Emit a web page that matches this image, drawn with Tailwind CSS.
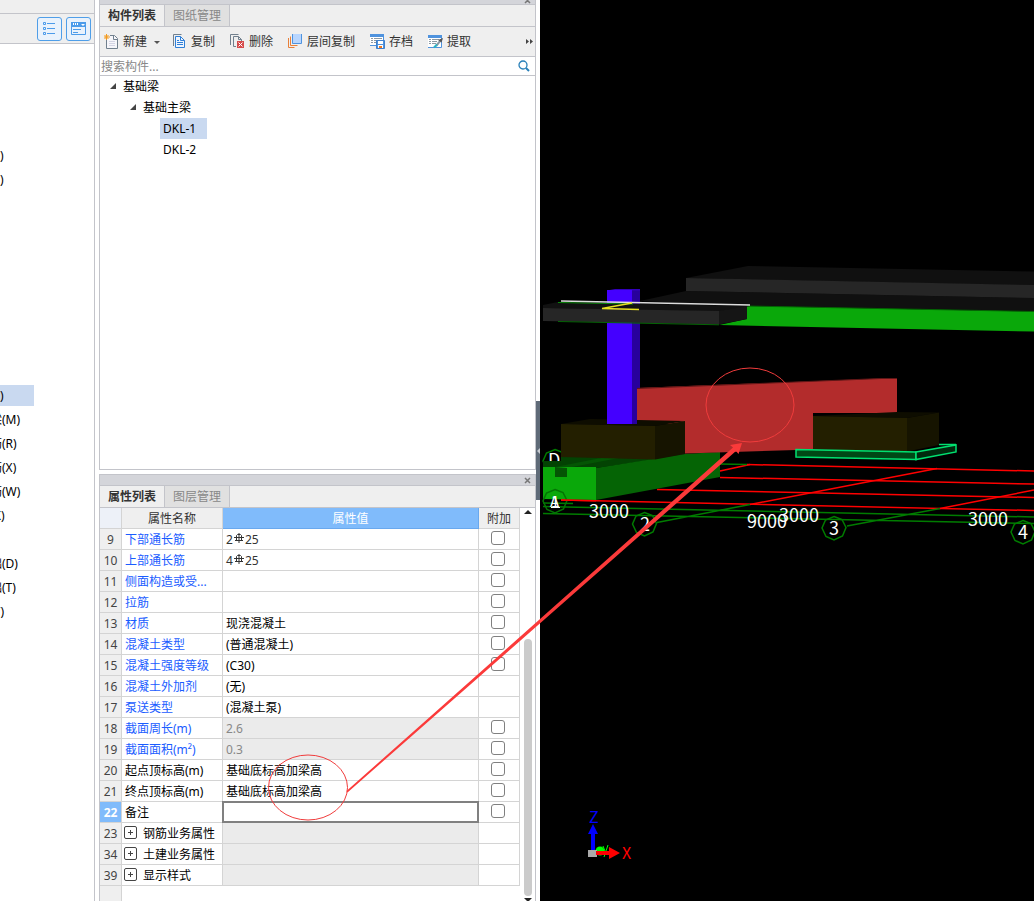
<!DOCTYPE html>
<html lang="zh-CN">
<head>
<meta charset="UTF-8">
<meta name="viewport" content="width=device-width, initial-scale=1.0">
<title>构件列表</title>
<script src="https://cdn.jsdelivr.net/npm/@tailwindcss/browser@4"></script>
</head>
<body class="relative flex h-screen overflow-hidden bg-white text-xs text-black font-['Noto_Sans','Noto_Sans_CJK_SC',sans-serif]">

<!-- Module tree -->
<aside class="flex w-[95px] shrink-0 flex-col overflow-hidden border-r border-[#c3c4ca]">
  <div class="h-[14px] shrink-0 border-b border-[#c3c4ca] bg-[#efefef]"></div>
  <div class="flex h-[30px] shrink-0 items-center justify-end gap-1 border-b border-[#c3c4ca] bg-[#efefef] pr-[3px]">
    <button aria-label="列表" class="flex h-6 w-[25px] items-center justify-center rounded-[3px] border border-[#4f9ee8] bg-[#e9f2fc]">
      <svg class="h-4 w-4" viewBox="0 0 16 16" fill="none" stroke="#4b9bea"><path d="M1.500 1.500h2v2h-2zM1.500 6.500h2v2h-2zM1.500 11.500h2v2h-2z"/><path d="M5 2.500h8M5 7.500h8M5 12.500h8"/></svg>
    </button>
    <button aria-label="窗口" class="flex h-6 w-[25px] items-center justify-center rounded-[3px] border border-[#4f9ee8] bg-[#e9f2fc]">
      <svg class="h-4 w-4" viewBox="0 0 16 16"><path d="M0 1h15v5H0z" fill="#4b9bea"/><path d="M2 2h1v2H2zM4 2h1v2H4zM6 2h1v2H6zM10 3h4l-2 2z" fill="#fff"/><path d="M.5 6v7.500h14V6M2 8.500h8M2 11.500h5" fill="none" stroke="#4b9bea"/></svg>
    </button>
  </div>
  <ul class="mt-[100px] -ml-[10px] leading-6 whitespace-nowrap">
    <li class="h-6">(F)</li>
    <li class="h-6">(F)</li>
  </ul>
  <ul class="mt-[193px] -ml-[10px] leading-6 whitespace-nowrap">
    <li class="mb-0.5 h-[21px] w-11 bg-[#c9d9f0] leading-[21px]">(F)</li>
    <li class="h-6">梁(M)</li>
    <li class="h-6">筋(R)</li>
    <li class="h-6">筋(X)</li>
    <li class="h-6">筋(W)</li>
    <li class="h-6">(K)</li>
    <li class="h-6"></li>
    <li class="h-6">础(D)</li>
    <li class="h-6">础(T)</li>
    <li class="h-6">(Y)</li>
  </ul>
</aside>

<main class="ml-1 flex w-[437px] shrink-0 flex-col">

  <!-- Component list -->
  <section class="flex h-[470px] shrink-0 flex-col border-x border-b border-[#c3c4ca]">
    <div class="flex h-[5px] shrink-0 items-end justify-end overflow-hidden border-b border-[#c3c4ca] bg-[#d4d5da] pr-1">
      <svg class="h-[7px] w-[7px]" viewBox="0 0 7 7"><path d="M1 1l5 5M6 1l-5 5" stroke="#777" stroke-width="1.500"/></svg>
    </div>
    <div class="flex h-[22px] shrink-0 border-b border-[#c3c4ca] bg-[#efefef]">
      <button class="w-[65px] border-r border-[#c3c4ca] font-bold text-[#333]">构件列表</button>
      <button class="w-[65px] border-r border-[#c3c4ca] bg-[#e0e0e0] text-[#888]">图纸管理</button>
    </div>
    <div class="flex h-[30px] shrink-0 items-center gap-[10px] border-b border-[#c3c4ca] bg-[#efefef] pl-1 whitespace-nowrap text-[#333]">
      <button class="flex items-center gap-[3px]">
        <svg class="h-4 w-4" viewBox="0 0 16 16" fill="none"><path d="M2.500 6v8.500h11v-10l-3-3H6" fill="#f6f6fa" stroke="#71808e"/><path d="M9.500 1.500v4h4" stroke="#71808e"/><path d="M5 7.500h6M5 9.500h6M5 11.500h6" stroke="#d4d4e4"/><path d="M2.500 0v6M0 3h6M.5 1l4 4M4.500 1l-4 4" stroke="#f39a1e"/></svg>
        新建
        <svg class="h-3 w-3" viewBox="0 0 12 12"><path d="M4 5h6L7 8z" fill="#555"/></svg>
      </button>
      <button class="flex items-center gap-[3px] pr-[5px]">
        <svg class="h-4 w-4" viewBox="0 0 16 16" fill="none"><path d="M1.500 12V.5h8" stroke="#71808e"/><path d="M3.500 2.500h5l4 4v7h-9z" fill="#eef5ff" stroke="#2f7fd6"/><path d="M8.500 2.500v4h4M5 6.500h2M5 8.500h6M5 10.500h6" stroke="#2f7fd6"/></svg>
        复制
      </button>
      <button class="flex items-center gap-[3px] pr-[5px]">
        <svg class="h-4 w-4" viewBox="0 0 16 16" fill="none"><path d="M.5 11V.5h8" stroke="#71808e"/><path d="M6 12.500H3.500v-10h5l3 3V7M8.500 2.500v3h3" stroke="#71808e"/><path d="M7 7h7v7H7z" fill="#d64b4b"/><path d="M8.500 8.500l4 4M12.500 8.500l-4 4" stroke="#fff"/></svg>
        删除
      </button>
      <button class="flex items-center gap-[3px] pr-[5px]">
        <svg class="h-4 w-4" viewBox="0 0 16 16" fill="none"><path d="M.5 4v9.500h6M2.500 2.500v9h7" stroke="#e8803a"/><path d="M4.500-.5h9v10h-9z" fill="#b8d6ff" stroke="#4f93de"/></svg>
        层间复制
      </button>
      <button class="flex items-center gap-[3px] pr-[5px]">
        <svg class="h-4 w-4" viewBox="0 0 16 16" fill="none"><path d="M-.5.500h14v11h-14z" fill="#fff" stroke="#4f93de"/><path d="M-1 0h15v3H-1z" fill="#4f93de"/><path d="M1 4.500h2M4 4.500h8M1 6.500h2M4 6.500h4M1 8.500h2M4 8.500h2" stroke="#8b98a3"/><path d="M6.500 6.500h8v8h-8z" fill="#4f93de" stroke="#3f80cc"/><path d="M8 7h5v3H8z" fill="#fff"/><path d="M8 11h5v3H8z" fill="#fff"/><path d="M9 12h3v2H9z" fill="#f07820"/></svg>
        存档
      </button>
      <button class="flex items-center gap-[3px] pr-[5px]">
        <svg class="h-4 w-4" viewBox="0 0 16 16" fill="none"><path d="M-.5 1.500h14v12h-14z" fill="#fff" stroke="#4f93de"/><path d="M-1 1h15v3H-1z" fill="#4f93de"/><path d="M1 5.500h2M4 5.500h7M1 7.500h2M4 7.500h5M1 9.500h2M4 9.500h4" stroke="#8b98a3"/><path d="M8 12l5-6" stroke="#8b98a3" stroke-width="2"/><path d="M6 13.500l3-3" stroke="#2bb5c4" stroke-width="2"/><path d="M10 6l3.500 2.500L15 4z" fill="#555"/></svg>
        提取
      </button>
      <button aria-label="更多" class="ml-auto pr-px">
        <svg class="h-2 w-2" viewBox="0 0 8 8"><path d="M0 1v5l3-2.500zM4 1v5l3-2.500z" fill="#444"/></svg>
      </button>
    </div>
    <div class="flex h-[19px] shrink-0 items-center border-b border-[#c3c4ca]">
      <input type="text" aria-label="搜索构件" placeholder="搜索构件..." class="min-w-0 flex-1 pt-px pl-px placeholder:text-[#888]">
      <button aria-label="搜索" class="pr-[5px]">
        <svg class="h-3 w-3" viewBox="0 0 12 12" fill="none" stroke="#2980b9"><circle cx="5" cy="5" r="4" stroke-width="1.300"/><path d="M8 8l3 3" stroke-width="2"/></svg>
      </button>
    </div>
    <ul class="leading-[21px]">
      <li class="flex items-center gap-[7px] pl-[9px]"><svg class="h-[7px] w-[7px]" viewBox="0 0 7 7"><path d="M7 0v6H1z" fill="#444"/></svg>基础梁</li>
      <li class="flex items-center gap-[7px] pl-[29px]"><svg class="h-[7px] w-[7px]" viewBox="0 0 7 7"><path d="M7 0v6H1z" fill="#444"/></svg>基础主梁</li>
      <li class="ml-[60px] w-[47px] bg-[#c9d9f0] pl-[3px]">DKL-1</li>
      <li class="ml-[60px] w-[47px] pl-[3px]">DKL-2</li>
    </ul>
  </section>

  <!-- Properties -->
  <section class="mt-1 flex min-h-0 flex-1 flex-col border-x border-t border-[#c3c4ca]">
    <div class="flex h-[11px] shrink-0 items-center justify-end border-b border-[#c3c4ca] bg-[#d4d5da] pr-1">
      <button aria-label="关闭"><svg class="h-[7px] w-[7px]" viewBox="0 0 7 7"><path d="M1 1l5 5M6 1l-5 5" stroke="#777" stroke-width="1.500"/></svg></button>
    </div>
    <div class="flex h-[22px] shrink-0 border-b border-[#c3c4ca] bg-[#efefef]">
      <button class="w-[65px] border-r border-[#c3c4ca] font-bold text-[#333]">属性列表</button>
      <button class="w-[65px] border-r border-[#c3c4ca] bg-[#e0e0e0] text-[#888]">图层管理</button>
    </div>
    <div class="flex min-h-0 flex-1">
      <div class="flex min-w-0 flex-1 flex-col overflow-hidden">
        <table class="w-full table-fixed border-separate border-spacing-0 leading-[18px] whitespace-nowrap [&_td]:h-[21px] [&_td]:border-r [&_td]:border-b [&_td]:border-[#d4d4d4] [&_td]:p-0 [&_td]:pt-0.5 [&_td]:pl-[3px] [&_th]:h-[21px] [&_th]:border-r [&_th]:border-b [&_th]:border-[#d4d4d4] [&_th]:p-0 [&_th]:pt-0.5 [&_th]:font-normal [&_tbody_th]:bg-[#efefef] [&_tbody_th]:text-[#444] [&_td:last-child]:p-0 [&_td:last-child]:pr-0.5 [&_td:last-child]:pb-0.5 [&_input[type=checkbox]]:block [&_input[type=checkbox]]:mx-auto [&_input[type=checkbox]]:h-[14px] [&_input[type=checkbox]]:w-[14px] [&_input[type=checkbox]]:appearance-none [&_input[type=checkbox]]:rounded-[3px] [&_input[type=checkbox]]:border [&_input[type=checkbox]]:border-[#808080] [&_input[type=checkbox]]:bg-white">
          <colgroup><col class="w-[22px]"><col class="w-[101px]"><col><col class="w-[41px]"></colgroup>
          <thead>
            <tr class="text-[#333]"><th class="bg-[#edf1f8]"></th><th class="bg-[#efefef]">属性名称</th><th class="border-[#69a8ee]! bg-[#80bbfb] text-white">属性值</th><th class="bg-[#efefef]">附加</th></tr>
          </thead>
          <tbody>
            <tr><th>9</th><td class="text-[#1a5cff]">下部通长筋</td><td class="text-[#333]">2<svg class="mx-px inline h-3 w-[10px] align-[-1px]" viewBox="0 0 10 12" fill="none" stroke="#333"><path d="M2.500 7V2.500l1-1h3l1 1V7M5 0v10M0 4.500h10M1 7.500h8"/></svg>25</td><td><input type="checkbox" aria-label="附加 9"></td></tr>
            <tr><th>10</th><td class="text-[#1a5cff]">上部通长筋</td><td class="text-[#333]">4<svg class="mx-px inline h-3 w-[10px] align-[-1px]" viewBox="0 0 10 12" fill="none" stroke="#333"><path d="M2.500 7V2.500l1-1h3l1 1V7M5 0v10M0 4.500h10M1 7.500h8"/></svg>25</td><td><input type="checkbox" aria-label="附加 10"></td></tr>
            <tr><th>11</th><td class="text-[#1a5cff]">侧面构造或受...</td><td></td><td><input type="checkbox" aria-label="附加 11"></td></tr>
            <tr><th>12</th><td class="text-[#1a5cff]">拉筋</td><td></td><td><input type="checkbox" aria-label="附加 12"></td></tr>
            <tr><th>13</th><td class="text-[#1a5cff]">材质</td><td>现浇混凝土</td><td><input type="checkbox" aria-label="附加 13"></td></tr>
            <tr><th>14</th><td class="text-[#1a5cff]">混凝土类型</td><td>(普通混凝土)</td><td><input type="checkbox" aria-label="附加 14"></td></tr>
            <tr><th>15</th><td class="text-[#1a5cff]">混凝土强度等级</td><td>(C30)</td><td><input type="checkbox" aria-label="附加 15"></td></tr>
            <tr><th>16</th><td class="text-[#1a5cff]">混凝土外加剂</td><td>(无)</td><td></td></tr>
            <tr><th>17</th><td class="text-[#1a5cff]">泵送类型</td><td>(混凝土泵)</td><td></td></tr>
            <tr><th>18</th><td class="text-[#1a5cff]">截面周长(m)</td><td class="bg-[#ebebeb] text-[#888]">2.6</td><td><input type="checkbox" aria-label="附加 18"></td></tr>
            <tr><th>19</th><td class="text-[#1a5cff]">截面面积(m²)</td><td class="bg-[#ebebeb] text-[#888]">0.3</td><td><input type="checkbox" aria-label="附加 19"></td></tr>
            <tr><th>20</th><td>起点顶标高(m)</td><td>基础底标高加梁高</td><td><input type="checkbox" aria-label="附加 20"></td></tr>
            <tr><th>21</th><td>终点顶标高(m)</td><td>基础底标高加梁高</td><td><input type="checkbox" aria-label="附加 21"></td></tr>
            <tr><th class="bg-[#80bbfb]! font-bold! text-white!">22</th><td><label for="remark">备注</label></td><td class="p-0!"><input id="remark" type="text" class="relative block h-5 w-full px-[3px] outline-2 -outline-offset-1 outline-[#808080]"></td><td><input type="checkbox" aria-label="附加 22"></td></tr>
            <tr><th>23</th><td><button class="flex items-start gap-[6px]"><svg class="-ml-px mt-px h-[13px] w-[13px]" viewBox="0 0 13 13" fill="none" stroke="#444"><rect x=".5" y=".5" width="12" height="12" rx="1.500"/><path d="M4 6.500h5M6.500 4v5"/></svg>钢筋业务属性</button></td><td class="bg-[#ebebeb]"></td><td></td></tr>
            <tr><th>34</th><td><button class="flex items-start gap-[6px]"><svg class="-ml-px mt-px h-[13px] w-[13px]" viewBox="0 0 13 13" fill="none" stroke="#444"><rect x=".5" y=".5" width="12" height="12" rx="1.500"/><path d="M4 6.500h5M6.500 4v5"/></svg>土建业务属性</button></td><td class="bg-[#ebebeb]"></td><td></td></tr>
            <tr><th>39</th><td><button class="flex items-start gap-[6px]"><svg class="-ml-px mt-px h-[13px] w-[13px]" viewBox="0 0 13 13" fill="none" stroke="#444"><rect x=".5" y=".5" width="12" height="12" rx="1.500"/><path d="M4 6.500h5M6.500 4v5"/></svg>显示样式</button></td><td class="bg-[#ebebeb]"></td><td></td></tr>
          </tbody>
        </table>
        <div class="w-[22px] flex-1 border-r border-[#d4d4d4] bg-[#efefef]"></div>
      </div>
      <!-- Scrollbar -->
      <div class="flex w-[15px] shrink-0 flex-col items-center pt-0.5">
        <svg class="h-1 w-2 shrink-0" viewBox="0 0 8 4"><path d="M4 0l4 4H0z" fill="#222"/></svg>
        <div class="mt-[125px] mb-0.5 w-2 flex-1 rounded-full bg-[#cbcbcb]"></div>
        <svg class="h-[3px] w-2 shrink-0" viewBox="0 0 8 3"><path d="M0 0h8L5 3H3z" fill="#222"/></svg>
      </div>
    </div>
  </section>
</main>

<!-- Splitter -->
<div class="w-1 shrink-0 pt-[401px]">
  <button aria-label="折叠" class="flex h-[99px] w-full items-center justify-center bg-[#5f6b78]">
    <svg class="h-[6px] w-[3px]" viewBox="0 0 3 6"><path d="M3 0v6L0 3z" fill="#c8ccd2"/></svg>
  </button>
</div>

<!-- 3D view -->
<section class="min-w-0 flex-1 overflow-hidden bg-black">
  <svg class="h-full w-full font-['Noto_Sans_CJK_SC',sans-serif]" font-size="18" fill="#fff">
    <g transform="translate(-540 0)">
      <!-- axis grid -->
      <g fill="none" stroke="#f00" stroke-width="1.500">
        <path d="M747 464.500L1034 471M720 477.500L1034 484M657 489.500L1034 497.500M561 500L1034 510.500"/>
        <path d="M720 471l30-6.500M750 504.500l187-36M940 508.500l94-18.500"/>
      </g>
      <g fill="none" stroke="#007c00" stroke-width="1.500">
        <path d="M720 464l27 .5M543 503l30 .5M543 506.500L1034 517M543 513.500L1034 523.500M657 522.500l93-18M847 526l93-17.500"/>
        <path id="oct" d="M644.500 512.500l8 3 4 8-3.500 8.500-8.500 4-8-3.500-4-8.500 3.500-8z"/>
        <use href="#oct" x="189.500" y="4"/>
        <use href="#oct" x="378.500" y="8"/>
        <use href="#oct" x="-89.500" y="-63"/>
      </g>
      <text x="548" y="467">D</text>

      <!-- foundation beam -->
      <path d="M543 467v-6h18v-4l124-4v2l-89 13z" fill="#034303"/>
      <path d="M555 467l46-9h18l-52 10z" fill="#045504"/>
      <path d="M596 468l89-14 35-2v25l-124 23z" fill="#056405"/>
      <path d="M543 467h53v33l-53-1z" fill="#0aa80a"/>
      <path d="M555 467l12 1v9h-12z" fill="#045504"/>
      <use href="#oct" x="-89.500" y="-23" fill="none" stroke="#047404" stroke-width="1.500"/>
      <path d="M561 500l35 .7" stroke="#f00" stroke-width="1.500"/>
      <text x="550" y="507" font-size="15">A</text>
      <text x="551" y="507" font-size="15">1</text>
      <path d="M551 507.500h9" stroke="#fff"/>

      <!-- slabs -->
      <path d="M686 278l62-12 286 5.500v14z" fill="#101010"/>
      <path d="M640 301l46-10 348 7v13l-287-5z" fill="#101010"/>
      <path d="M686 278l348 7v13l-348-7z" fill="#262626"/>
      <path d="M719 325l28-6v-13l287 5.500v20z" fill="#0aa80a"/>
      <path d="M747 306l287 5.500" stroke="#056405"/>

      <!-- column -->
      <path d="M632 290l8-1v135h-8z" fill="#28009c"/>
      <path d="M607 290.500l8-1.500h25v1.500z" fill="#30b"/>
      <path d="M607 290h25v134h-25z" fill="#40f"/>
      <path d="M543 305l15-3 192 4-31 5.500-176-3.500z" fill="#111"/>
      <path d="M719 311l28-5v13l-28 5.500z" fill="#151515"/>
      <path d="M543 308l176 3v13.500l-176-3.500z" fill="#262626"/>
      <path d="M558 321.500l161 3.300" stroke="#056405"/>
      <path d="M558 302.500l75 1.500" stroke="#0a8a0a"/>
      <path d="M561 301l189 4" stroke="#ddd" stroke-width="1.500"/>
      <path d="M632 303l-30 5.500 37 1" fill="none" stroke="#e8e020" stroke-width="1.300"/>

      <!-- selected wall beam -->
      <path d="M637 388l244-9.500h16V413H813v36.500l-128 4V424h-48z" fill="#b32c2c"/>
      <path d="M637 388.500l244-10h16" fill="none" stroke="#601616"/>

      <!-- footings -->
      <path d="M561 424l29-5 95 2-30 5z" fill="#0e0d00"/>
      <path d="M607 400h25v24h-25z" fill="#40f"/>
      <path d="M632 388h5v36h-5z" fill="#28009c"/>
      <path d="M561 424l94 2v33.500l-94-2.500z" fill="#231f00"/>
      <path d="M655 426l30-5v33l-30 5.500z" fill="#161400"/>
      <path d="M813 416l84-4 42 .5-32 5.500z" fill="#0e0d00"/>
      <path d="M813 416l94 2v33.500l-94-2z" fill="#231f00"/>
      <path d="M907 418l32-5.500V445l-32 6.500z" fill="#161400"/>
      <g stroke="#00e070" stroke-width="1.500">
        <path d="M796 449.500l120 2.500v7.500l-120-2.500z" fill="#004816"/>
        <path d="M916 452l40-7v7l-40 7.500z" fill="#002a0e"/>
        <path d="M939 444.500h17"/>
      </g>

      <!-- dimensions -->
      <text x="589" y="518">3000</text>
      <text x="747" y="528">9000</text>
      <text x="779" y="522">3000</text>
      <text x="968" y="526">3000</text>
      <g text-anchor="middle">
        <text x="645" y="531">2</text>
        <text x="834" y="535">3</text>
        <text x="1023" y="539">4</text>
      </g>

      <!-- axis gizmo -->
      <circle cx="600" cy="851" r="4.500" fill="#0f0"/>
      <path d="M603 846l2 5M608 845l-4 12" stroke="#0f0"/>
      <path d="M588 850h9v7h-9z" fill="#aaa"/>
      <path d="M591 834h-3l5-10 5 10h-3v16h-4z" fill="#00f"/>
      <path d="M596 851h13v-4l11 6-11 6v-4h-13z" fill="red"/>
      <text x="589" y="823" font-size="16" fill="#00f">Z</text>
      <text x="622" y="859" font-size="16" fill="red">X</text>
    </g>
  </svg>
</section>

<!-- Annotation -->
<svg class="pointer-events-none absolute inset-0 h-full w-full">
  <g fill="none" stroke="#f03c3c">
    <ellipse cx="308" cy="787.500" rx="39.500" ry="32.500"/>
    <ellipse cx="750" cy="405" rx="44" ry="37"/>
  </g>
  <path d="M346.500 791L733 447.500l-3-2.500 12-2-3.500 11-2.500-3L347.500 792.500z" fill="#fb3a3a"/>
</svg>

</body>
</html>
